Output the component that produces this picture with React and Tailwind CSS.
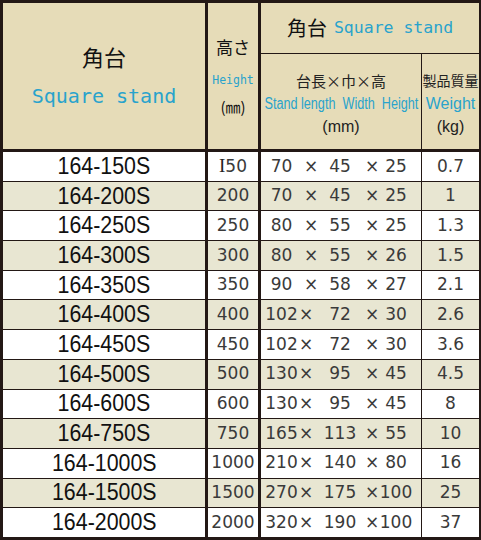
import React from 'react';

// 角台 Square stand 寸法表
const rows = [
    ['164-150S', '150', ['70', '45', '25'], '0.7'],
    ['164-200S', '200', ['70', '45', '25'], '1'],
    ['164-250S', '250', ['80', '55', '25'], '1.3'],
    ['164-300S', '300', ['80', '55', '26'], '1.5'],
    ['164-350S', '350', ['90', '58', '27'], '2.1'],
    ['164-400S', '400', ['102', '72', '30'], '2.6'],
    ['164-450S', '450', ['102', '72', '30'], '3.6'],
    ['164-500S', '500', ['130', '95', '45'], '4.5'],
    ['164-600S', '600', ['130', '95', '45'], '8'],
    ['164-750S', '750', ['165', '113', '55'], '10'],
    ['164-1000S', '1000', ['210', '140', '80'], '16'],
    ['164-1500S', '1500', ['270', '175', '100'], '25'],
    ['164-2000S', '2000', ['320', '190', '100'], '37'],
];

const jp = "font-['Noto_Sans_CJK_JP',sans-serif]";
const mono = "font-['DejaVu_Sans_Mono',monospace]";
const num = "font-['DejaVu_Sans',sans-serif] text-[17px] text-[#3a3a3a]";

const Slot = ({ className = '', children }) => (
    <span className={`flex justify-center whitespace-nowrap ${className}`}>{children}</span>
);

const Row = ({ row, alt }) => {
    const [model, height, dims, weight] = row;
    const bg = alt ? 'bg-[#e8e6d2]' : 'bg-white';
    return (
        <div className="flex flex-1 min-h-0">
            <div className={`w-[202px] ${bg} flex items-center justify-center`}>
                <span className="inline-block scale-x-[0.93] font-['Liberation_Sans',sans-serif] text-[23px] leading-none text-[#111]">
                    {model}
                </span>
            </div>
            <div className={`w-[50px] ml-[3px] ${bg} flex items-center justify-center ${num}`}>
                {height === '150' ? (
                    <span>
                        <span className="font-['Liberation_Serif',serif] text-[19px] text-[#222]">I</span>50
                    </span>
                ) : height}
            </div>
            <div className={`w-[160px] ml-[3px] ${bg} flex items-center ${num}`}>
                <Slot className="w-[41px]">{dims[0]}</Slot>
                <Slot className={`w-[18px] ${dims[0].length > 2 ? '-translate-x-[5px]' : ''}`}>×</Slot>
                <Slot className="w-[40px]">{dims[1]}</Slot>
                <Slot className="w-[24px]">×</Slot>
                <Slot className="w-[24px]">{dims[2]}</Slot>
            </div>
            <div className={`w-[57px] ml-[1px] ${bg} flex items-center justify-center ${num}`}>
                {weight}
            </div>
        </div>
    );
};

export default function App() {
    return (
        <div className="w-[481px] h-[540px] bg-[#231815] pt-[3px] pl-[3px] pr-[2px] pb-[3px] flex flex-col">
            {/* ヘッダー */}
            <div className="flex h-[146px]">
                <div className="w-[202px] bg-[#e6dcb8] flex flex-col items-center justify-center">
                    <div className={`${jp} text-[22px] leading-[30px] text-[#111]`}>角台</div>
                    <div className={`${mono} text-[20px] leading-[30px] mt-[10px] text-[#29a3cc]`}>Square stand</div>
                </div>
                <div className="w-[50px] ml-[3px] bg-[#e6dcb8] flex flex-col items-center justify-center">
                    <div className={`${jp} text-[17px] leading-[24px] text-[#111]`}>高さ</div>
                    <div className={`${mono} text-[11.5px] leading-[18px] mt-[12px] text-[#29a3cc]`}>Height</div>
                    <div className={`${jp} text-[15px] leading-[20px] mt-[8px] text-[#111]`}>(㎜)</div>
                </div>
                <div className="w-[218px] ml-[3px] flex flex-col">
                    <div className="h-[50px] bg-[#e6dcb8] flex items-center justify-center gap-[7px]">
                        <span className={`${jp} text-[20px] text-[#111]`}>角台</span>
                        <span className={`${mono} text-[16.5px] text-[#29a3cc]`}>Square stand</span>
                    </div>
                    <div className="flex flex-1 mt-[1px]">
                        <div className="w-[160px] bg-[#e6dcb8] flex flex-col items-center justify-center pt-[3px]">
                            <div className={`${jp} text-[15px] leading-[23px] text-[#222]`}>台長×巾×高</div>
                            <div className="leading-[23px]">
                                <span className="inline-block whitespace-pre scale-x-[0.79] font-['Liberation_Sans',sans-serif] text-[16px] text-[#29a3cc]">
                                    Stand length  Width  Height
                                </span>
                            </div>
                            <div className="font-['Liberation_Sans',sans-serif] text-[16px] leading-[23px] text-[#222]">(mm)</div>
                        </div>
                        <div className="w-[57px] ml-[1px] bg-[#e6dcb8] flex flex-col items-center justify-center pt-[3px]">
                            <div className={`${jp} text-[14px] leading-[23px] text-[#222] whitespace-nowrap`}>製品質量</div>
                            <div className="font-['Liberation_Sans',sans-serif] text-[16px] leading-[23px] text-[#29a3cc]">Weight</div>
                            <div className="font-['Liberation_Sans',sans-serif] text-[16px] leading-[23px] text-[#222]">(kg)</div>
                        </div>
                    </div>
                </div>
            </div>

            {/* データ行 */}
            <div className="flex flex-col flex-1 mt-[3px] gap-[1px]">
                {rows.map((row, i) => (
                    <Row key={row[0]} row={row} alt={i % 2 === 1} />
                ))}
            </div>
        </div>
    );
}
